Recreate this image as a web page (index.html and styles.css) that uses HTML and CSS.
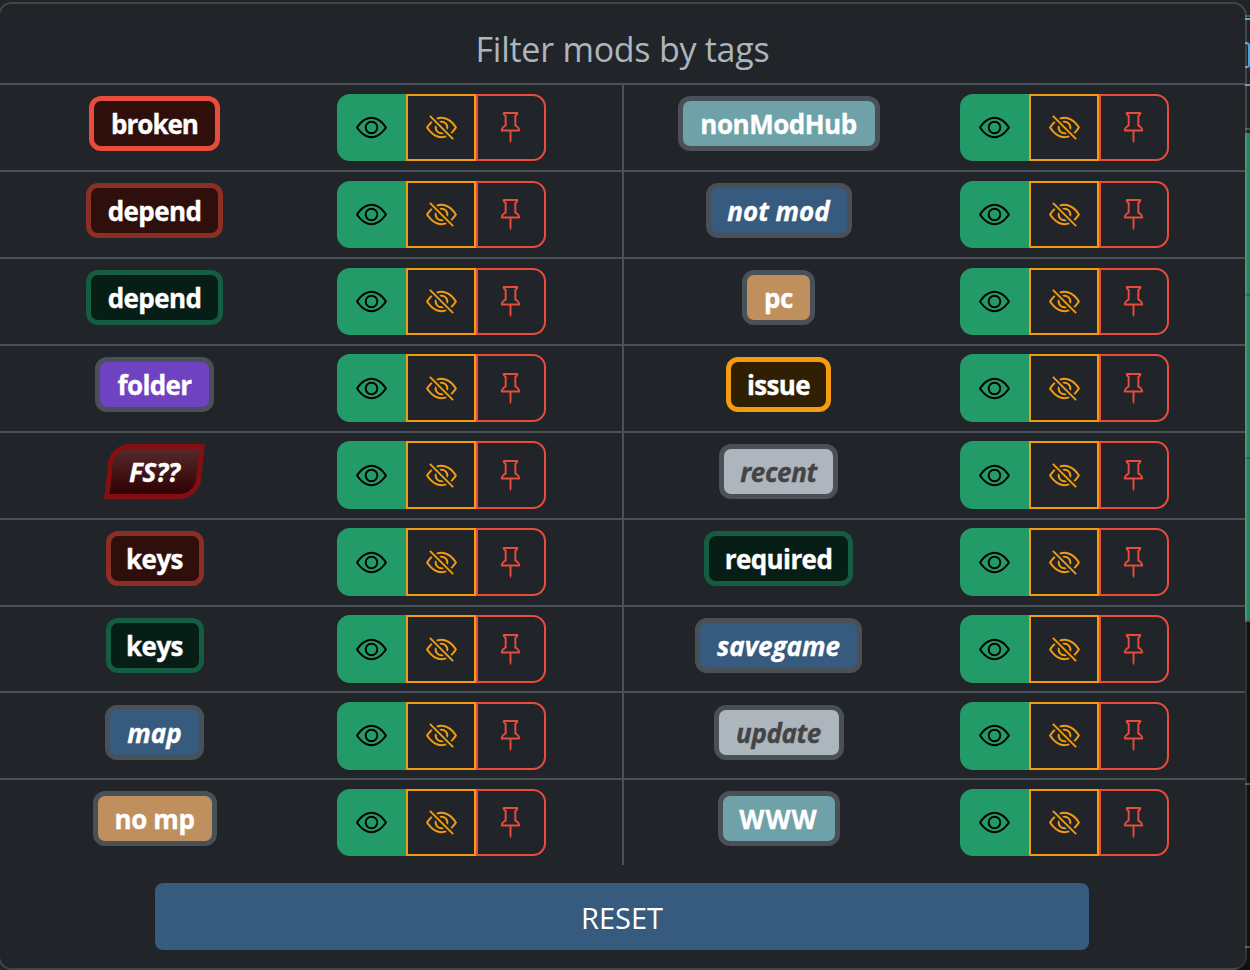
FILE: index.html
```html
<!DOCTYPE html>
<html lang="en">
<head>
<meta charset="utf-8">
<title>Filter mods by tags</title>
<link rel="stylesheet" href="styles.css">
</head>
<body>
<svg class="sprite" aria-hidden="true">
  <symbol id="eye" viewBox="0 0 16 16"><path d="M16 8s-3-5.5-8-5.5S0 8 0 8s3 5.5 8 5.5S16 8 16 8M1.173 8a13 13 0 0 1 1.66-2.043C4.12 4.668 5.88 3.5 8 3.5s3.879 1.168 5.168 2.457A13 13 0 0 1 14.828 8q-.086.13-.195.288c-.335.48-.83 1.12-1.465 1.755C11.879 11.332 10.119 12.5 8 12.5s-3.879-1.168-5.168-2.457A13 13 0 0 1 1.172 8z"/><path d="M8 5.5a2.5 2.5 0 1 0 0 5 2.5 2.5 0 0 0 0-5M4.5 8a3.5 3.5 0 1 1 7 0 3.5 3.5 0 0 1-7 0"/></symbol>
  <symbol id="eye-slash" viewBox="0 0 16 16"><path d="M13.359 11.238C15.06 9.72 16 8 16 8s-3-5.5-8-5.5a7 7 0 0 0-2.79.588l.77.771A6 6 0 0 1 8 3.5c2.12 0 3.879 1.168 5.168 2.457A13 13 0 0 1 14.828 8q-.086.13-.195.288c-.335.48-.83 1.12-1.465 1.755q-.247.248-.517.486z"/><path d="M11.297 9.176a3.5 3.5 0 0 0-4.474-4.474l.823.823a2.5 2.5 0 0 1 2.829 2.829zm-2.943 1.299.822.822a3.5 3.5 0 0 1-4.474-4.474l.823.823a2.5 2.5 0 0 0 2.829 2.829"/><path d="M3.35 5.47q-.27.24-.518.487A13 13 0 0 0 1.172 8l.195.288c.335.48.83 1.12 1.465 1.755C4.121 11.332 5.881 12.5 8 12.5c.716 0 1.39-.133 2.02-.36l.77.772A7 7 0 0 1 8 13.5C3 13.5 0 8 0 8s.939-1.721 2.641-3.238l.708.709zm10.296 8.884-12-12 .708-.708 12 12z"/></symbol>
  <symbol id="pin" viewBox="0 0 16 16"><path d="M4.146.146A.5.5 0 0 1 4.5 0h7a.5.5 0 0 1 .5.5c0 .68-.342 1.174-.646 1.479-.126.125-.25.224-.354.298v4.431l.078.048c.203.127.476.314.751.555C12.36 7.775 13 8.527 13 9.5a.5.5 0 0 1-.5.5h-4v4.5c0 .276-.224 1.5-.5 1.5s-.5-1.224-.5-1.5V10h-4a.5.5 0 0 1-.5-.5c0-.973.64-1.725 1.17-2.189A6 6 0 0 1 5 6.708V2.277a3 3 0 0 1-.354-.298C4.342 1.674 4 1.179 4 .5a.5.5 0 0 1 .146-.354m1.58 1.408-.002-.001zm-.002-.001.002.001A.5.5 0 0 1 6 2v5a.5.5 0 0 1-.276.447h-.002l-.012.007-.054.03a5 5 0 0 0-.827.58c-.318.278-.585.596-.725.936h7.792c-.14-.34-.407-.658-.725-.936a5 5 0 0 0-.881-.61l-.012-.006h-.002A.5.5 0 0 1 10 7V2a.5.5 0 0 1 .295-.458 1.8 1.8 0 0 0 .351-.271c.08-.08.155-.17.214-.271H5.14q.091.15.214.271a1.8 1.8 0 0 0 .37.282"/></symbol>
</svg>
<div class="page-edge">
  <div class="edge-tool"><div class="edge-icon"></div></div>
  <div class="edge-list"></div>
  <div class="edge-foot"></div>
</div>
<main class="panel">
  <h1 class="title">Filter mods by tags</h1>
  <div class="columns">
    <section class="column" id="left"></section>
    <section class="column" id="right"></section>
  </div>
  <button class="reset">RESET</button>
</main>
<script src="tags.js"></script>
</body>
</html>
```
FILE: tags.js
```js
// label, style, badge width
const columns = {
  left: [
    ['broken', 'danger', 131], ['depend', 'missing', 137], ['depend', 'met', 137],
    ['folder', 'purple', 119], ['FS??', 'version', 95], ['keys', 'missing', 98],
    ['keys', 'met', 98], ['map', 'blue', 99], ['no mp', 'tan', 124]
  ],
  right: [
    ['nonModHub', 'teal', 202], ['not mod', 'blue', 146], ['pc', 'tan', 73],
    ['issue', 'warning', 105], ['recent', 'light', 119], ['required', 'met', 149],
    ['savegame', 'blue', 167], ['update', 'light', 130], ['WWW', 'teal caps', 122]
  ]
};
const button = (kind, icon) =>
  `<button class="choice ${kind}" aria-label="${icon}"><svg class="icon"><use href="#${icon}"/></svg></button>`;
for (const [id, tags] of Object.entries(columns)) {
  document.getElementById(id).innerHTML = tags.map(([label, style, width]) =>
    `<div class="row"><div class="tag-cell"><span class="badge ${style}" style="width:${width}px"><span class="label">${label}</span></span></div>` +
    `<div class="choices">${button('show', 'eye')}${button('hide', 'eye-slash')}${button('only', 'pin')}</div></div>`
  ).join('');
}
```
FILE: styles.css
```css
* { box-sizing: border-box; }
body {
  margin: 0;
  height: 970px;
  overflow: hidden;
  background: #212529;
  font-family: "Open Sans", "Noto Sans", sans-serif;
}
.sprite { position: absolute; width: 0; height: 0; }
.page-edge {
  position: absolute;
  top: 0;
  right: 0;
  width: 12px;
  height: 970px;
  background: linear-gradient(#212529 0 620px, #111 620px);
}
.edge-tool {
  height: 133px;
  padding-top: 42px;
  background: linear-gradient(transparent 15px, #495057 15px 17px, transparent 17px 18px, #3ba9df 18px 20px, transparent 20px 84px, #3ba9df 84px 86px, transparent 86px 128px, #495057 128px 130px, transparent 130px);
}
.edge-icon {
  height: 26px;
  border: 2px solid #3ba9df;
  border-left: 0;
  border-radius: 0 4px 3px 0;
}
.edge-list { height: 487px; background: linear-gradient(transparent 161px, #495057 161px 163px, transparent 163px 324px, #495057 324px 326px, transparent 326px), #23875d; }
.edge-foot { height: 350px; background: linear-gradient(#495057 0 2px, transparent 2px 163px, #495057 163px 165px, transparent 165px 326px, #495057 326px 328px, transparent 328px); }
.panel {
  position: relative;
  width: 1249px;
  height: 968px;
  margin: 2px 0 0 -2px;
  border: 2px solid rgba(255, 255, 255, .15);
  border-radius: 14px;
  background: #212529;
  background-clip: padding-box;
}
.title {
  margin: 0;
  height: 79.25px;
  line-height: 91px;
  text-align: center;
  font-size: 34px;
  font-weight: 400;
  letter-spacing: -.26px;
  color: #adb5bd;
}
.columns { display: flex; }
.column { width: 622px; }
.column + .column { width: 623px; }
.column + .column .row { border-left: 2px solid #495057; }
.column + .column .choices { margin-left: 27px; }
.row {
  display: flex;
  height: 86.89px;
  border-top: 2px solid #495057;
}
.tag-cell { width: 309px; padding-top: 11.2px; display: flex; justify-content: center; align-items: flex-start; }
.badge {
  display: flex;
  justify-content: center;
  align-items: center;
  height: 55px;
  border: 5px solid #495057;
  border-radius: 12px;
  color: #fff;
  font-size: 26px;
  font-weight: 700;
  line-height: 1;
  letter-spacing: -.6px;
  white-space: nowrap;
  -webkit-text-stroke: .35px currentColor;
}
.label { padding-top: 1px; }
.danger { background: #2e0f0c; border-color: #e74c3c; letter-spacing: -1px; }
.missing { background: #2e0f0c; border-color: #8b2e24; }
.met { background: #071e16; border-color: #155d40; }
.purple { background: #6f42c1; }
.blue { background: #375a7f; font-style: italic; letter-spacing: 0; }
.tan { background: #c08f5e; letter-spacing: -.4px; }
.teal { background: #6ea1a8; letter-spacing: -.5px; }
.caps { letter-spacing: 1px; }
.light { background: #adb5bd; color: #444; font-style: italic; letter-spacing: -.4px; }
.warning { background: #311f04; border-color: #f39c12; }
.version {
  border-color: #850f10;
  border-radius: 20px 0;
  background: linear-gradient(#552a2b, #300003);
  transform: skewX(-6deg);
  font-style: italic;
  letter-spacing: -.2px;
}
.version .label { transform: skewX(6deg); }
.choices { display: flex; padding-top: 8.5px; margin-left: 28px; }
.choice {
  display: flex;
  align-items: center;
  justify-content: center;
  width: 70px;
  height: 67.74px;
  padding: .4px 0 0;
  border: 2px solid;
  background: transparent;
}
.icon { width: 31px; height: 31px; fill: currentColor; }
.show { width: 69px; background: #239b69; border-color: #239b69; border-radius: 13px 0 0 13px; color: #000; }
.hide { color: #f39c12; }
.only { color: #e74c3c; border-radius: 0 13px 13px 0; padding-right: 1px; }
.reset {
  display: block;
  width: 934px;
  height: 67px;
  margin: 17.75px 0 0 155px;
  padding: 2px 0 0;
  border: 0;
  border-radius: 8px;
  background: #375a7f;
  color: #fff;
  font: 29px "Open Sans", "Noto Sans", sans-serif;
}
```
